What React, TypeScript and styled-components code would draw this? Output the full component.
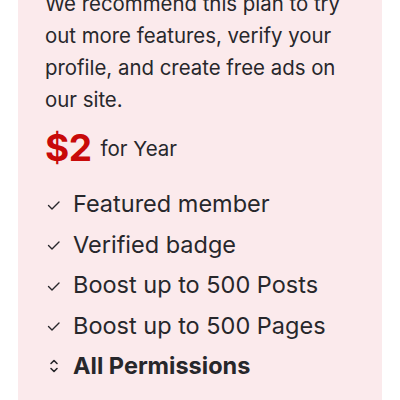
import styled, { createGlobalStyle } from 'styled-components';

const Global = createGlobalStyle`
  body {
    margin: 0;
    background: #ffffff;
    font-family: Inter, "Noto Sans", sans-serif;
    color: #27272b;
    overflow: hidden;
  }
`;

const Page = styled.div`
  padding: 0 18px;
  margin-top: -26px;
`;

const Card = styled.section`
  background: #fbeaec;
  padding: 14px 27px 40px;
`;

const Intro = styled.p`
  margin: 0;
  font-size: 20.4px;
  line-height: 32px;
`;

const Price = styled.div`
  display: flex;
  align-items: center;
  gap: 9px;
  margin-top: 10px;
`;

const Amount = styled.span`
  font-size: 37px;
  line-height: 44px;
  font-weight: 700;
  color: #c80a0a;
  letter-spacing: -0.5px;
`;

const Period = styled.span`
  font-size: 20.5px;
`;

const Features = styled.ul`
  list-style: none;
  margin: 17px 0 0;
  padding: 0;
  display: flex;
  flex-direction: column;
  gap: 7.5px;
`;

const Feature = styled.li<{ $bold?: boolean }>`
  display: flex;
  align-items: center;
  gap: 10px;
  font-size: 23.5px;
  line-height: 33px;
  font-weight: ${(p) => (p.$bold ? 700 : 400)};
`;

const Icon = styled.svg`
  width: 18px;
  height: 18px;
  flex: none;
`;

const Check = () => (
  <Icon viewBox="0 0 18 18" fill="none" stroke="#27272b" strokeWidth="1.4" strokeLinecap="round" strokeLinejoin="round">
    <path d="M3.5 10.5l3.5 3.5 7-7" />
  </Icon>
);

const Chevrons = () => (
  <Icon viewBox="0 0 18 18" fill="none" stroke="#27272b" strokeWidth="1.6" strokeLinecap="round" strokeLinejoin="round">
    <path d="M6 6.5l3-3 3 3M6 11.5l3 3 3-3" />
  </Icon>
);

const features = ['Featured member', 'Verified badge', 'Boost up to 500 Posts', 'Boost up to 500 Pages'];

export default function App() {
  return (
    <>
      <Global />
      <Page>
        <Card>
          <Intro>
            We recommend this plan to try out more features, verify your profile, and create free ads on our site.
          </Intro>
          <Price>
            <Amount>$2</Amount>
            <Period>for Year</Period>
          </Price>
          <Features>
            {features.map((f) => (
              <Feature key={f}>
                <Check />
                {f}
              </Feature>
            ))}
            <Feature $bold>
              <Chevrons />
              All Permissions
            </Feature>
          </Features>
        </Card>
      </Page>
    </>
  );
}
